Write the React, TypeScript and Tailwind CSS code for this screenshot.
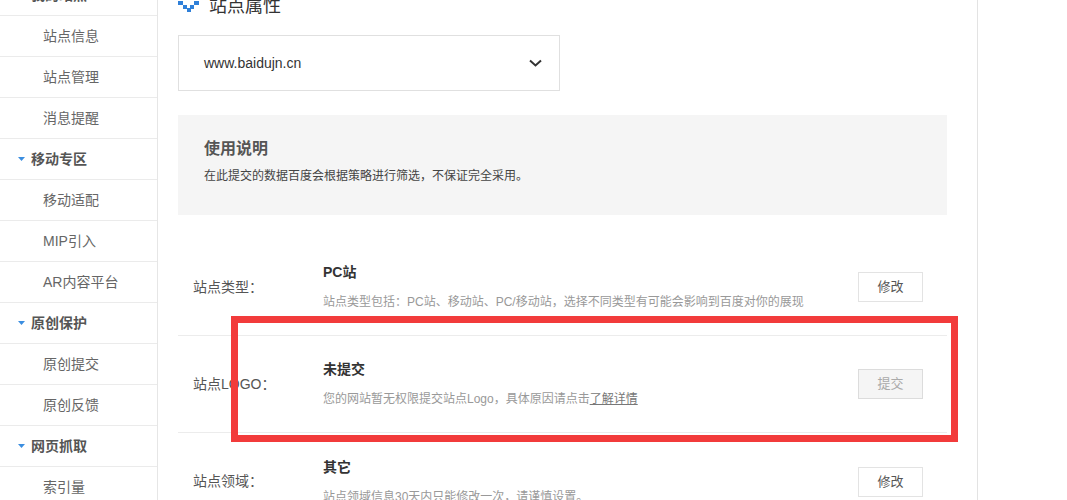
import React from "react";

type NavItem = { label: string; header?: boolean };

const nav: NavItem[] = [
  { label: "我的站点", header: true },
  { label: "站点信息" },
  { label: "站点管理" },
  { label: "消息提醒" },
  { label: "移动专区", header: true },
  { label: "移动适配" },
  { label: "MIP引入" },
  { label: "AR内容平台" },
  { label: "原创保护", header: true },
  { label: "原创提交" },
  { label: "原创反馈" },
  { label: "网页抓取", header: true },
  { label: "索引量" },
];

const font = "font-['Liberation_Sans','Noto_Sans_CJK_SC',sans-serif]";

function Caret() {
  return (
    <svg width="7" height="4" viewBox="0 0 7 4" className="mr-[6px]">
      <path d="M0 0 H7 L3.5 4 Z" fill="#3b8ee0" />
    </svg>
  );
}

function TitleIcon() {
  return (
    <svg width="21" height="13" viewBox="0 0 21 13" className="mr-[10px]">
      <rect x="0" y="1" width="5" height="4" fill="#2f80d9" />
      <rect x="5" y="5" width="4" height="4" fill="#2f80d9" />
      <rect x="9" y="8" width="4" height="4" fill="#2f80d9" />
      <rect x="12" y="5" width="4" height="4" fill="#2f80d9" />
      <rect x="16" y="1" width="5" height="4" fill="#2f80d9" />
    </svg>
  );
}

function Row({
  label,
  title,
  desc,
  action,
  disabled,
  last,
}: {
  label: string;
  title: string;
  desc: React.ReactNode;
  action: string;
  disabled?: boolean;
  last?: boolean;
}) {
  return (
    <div className={"flex items-center h-[97px] pl-[15px] pr-[24px] " + (last ? "" : "border-b border-[#ececec]")}>
      <div className="w-[130px] text-[14px] text-[#555]">{label}</div>
      <div className="flex-1">
        <div className="text-[14px] leading-5 font-bold text-[#333]">{title}</div>
        <div className="mt-[10px] text-[12px] leading-5 text-[#999]">{desc}</div>
      </div>
      <button
        className={
          "w-[65px] h-[30px] text-[13px] border " +
          (disabled ? "bg-[#f5f5f5] border-[#dcdcdc] text-[#aaa]" : "bg-white border-[#e3e3e3] text-[#555]")
        }
      >
        {action}
      </button>
    </div>
  );
}

export default function App() {
  return (
    <div className={"relative flex h-[500px] w-[1067px] overflow-hidden bg-white " + font}>
      {/* sidebar */}
      <div className="w-[158px] border-r border-[#e6e6e6] shrink-0">
        <div className="-mt-[25px]">
          {nav.map((n) => (
            <div
              key={n.label}
              className={
                "flex items-center h-[41px] border-b border-[#ebebeb] " +
                (n.header ? "pl-[18px] text-[14px] font-bold text-[#555]" : "pl-[43px] text-[14px] text-[#666]")
              }
            >
              {n.header && <Caret />}
              {n.label}
            </div>
          ))}
        </div>
      </div>

      {/* main */}
      <div className="w-[820px] border-r border-[#e3e3e3] shrink-0 pl-[20px] pr-[30px]">
        <div className="-mt-[6px] flex items-center h-[24px] text-[18px] text-[#333]">
          <TitleIcon />
          站点属性
        </div>

        <div className="mt-[17px] w-[382px] h-[56px] border border-[#e0e0e0] flex items-center justify-between pl-[25px] pr-[17px]">
          <span className="text-[14px] text-[#333]">www.baidujn.cn</span>
          <svg width="13" height="8" viewBox="0 0 13 8">
            <path d="M1 1.5 L6.5 6.5 L12 1.5" fill="none" stroke="#333" strokeWidth="2" />
          </svg>
        </div>

        <div className="mt-[24px] h-[100px] bg-[#f5f5f5] pl-[26px] pt-[24px]">
          <div className="text-[16px] leading-5 font-bold text-[#555]">使用说明</div>
          <div className="mt-[7px] text-[12px] leading-5 text-[#444]">
            在此提交的数据百度会根据策略进行筛选，不保证完全采用。
          </div>
        </div>

        <div className="mt-[24px]">
          <Row
            label="站点类型："
            title="PC站"
            desc="站点类型包括：PC站、移动站、PC/移动站，选择不同类型有可能会影响到百度对你的展现"
            action="修改"
          />
          <Row
            label="站点LOGO："
            title="未提交"
            desc={
              <>
                您的网站暂无权限提交站点Logo，具体原因请点击<span className="underline text-[#777]">了解详情</span>
              </>
            }
            action="提交"
            disabled
          />
          <Row
            label="站点领域："
            title="其它"
            desc="站点领域信息30天内只能修改一次，请谨慎设置。"
            action="修改"
            last
          />
        </div>
      </div>

      {/* highlight overlay */}
      <div className="absolute left-[231px] top-[316px] w-[727px] h-[126px] border-[7px] border-[#f23b3b] pointer-events-none" />
    </div>
  );
}
